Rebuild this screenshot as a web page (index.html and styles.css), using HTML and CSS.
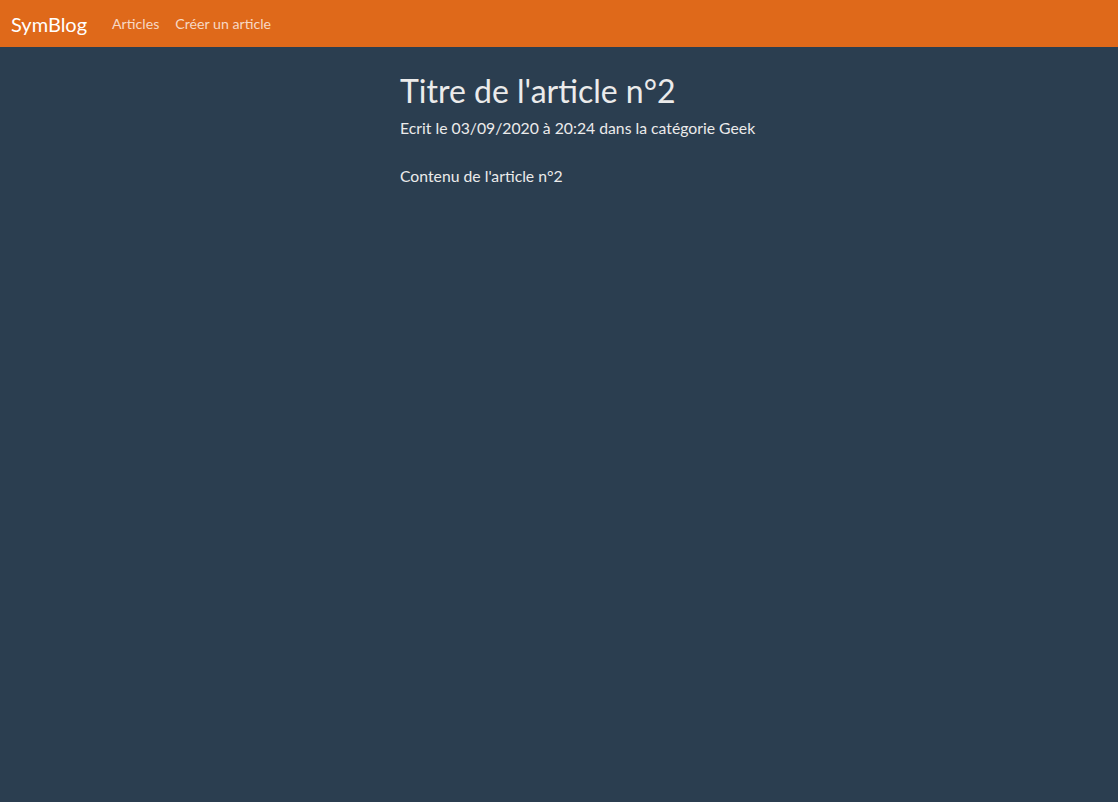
FILE: index.html
```html
<!DOCTYPE html>
<html lang="fr">
<head>
<meta charset="utf-8">
<title>SymBlog</title>
<link rel="stylesheet" href="styles.css">
</head>
<body>
<nav class="navbar">
  <a class="brand" href="#">SymBlog</a>
  <ul class="nav">
    <li><a href="#">Articles</a></li>
    <li><a href="#">Créer un article</a></li>
  </ul>
</nav>
<main class="content">
  <article class="article">
    <h2 class="title">Titre de l'article n°2</h2>
    <div class="meta">Ecrit le 03/09/2020 à 20:24 dans la catégorie Geek</div>
    <div class="body">
      <p>Contenu de l'article n°2</p>
    </div>
  </article>
</main>
</body>
</html>
```
FILE: styles.css
```css
html, body {
  margin: 0;
  padding: 0;
  height: 100%;
}
body {
  background: #2b3e50;
  color: #ebebeb;
  font-family: Lato, "Open Sans", sans-serif;
  font-size: 15.75px;
  line-height: 1.5;
}
.navbar {
  display: flex;
  align-items: center;
  background: #df691a;
  height: 47px;
  padding: 0 11px;
  box-sizing: border-box;
}
.brand {
  color: #fff;
  text-decoration: none;
  font-size: 20px;
  margin-right: 17px;
}
.nav {
  display: flex;
  list-style: none;
  margin: 0;
  padding: 0;
}
.nav a {
  display: block;
  color: rgba(255, 255, 255, 0.75);
  text-decoration: none;
  font-size: 14.2px;
  padding: 0 8px;
}
.content {
  padding: 25px 0 0 400px;
}
.title {
  margin: 0 0 6px;
  font-size: 32px;
  font-weight: 400;
  line-height: 1.2;
  color: #ebebeb;
}
.meta {
  margin: 0;
}
.body {
  margin-top: 24px;
}
.body p {
  margin: 0;
}
```
